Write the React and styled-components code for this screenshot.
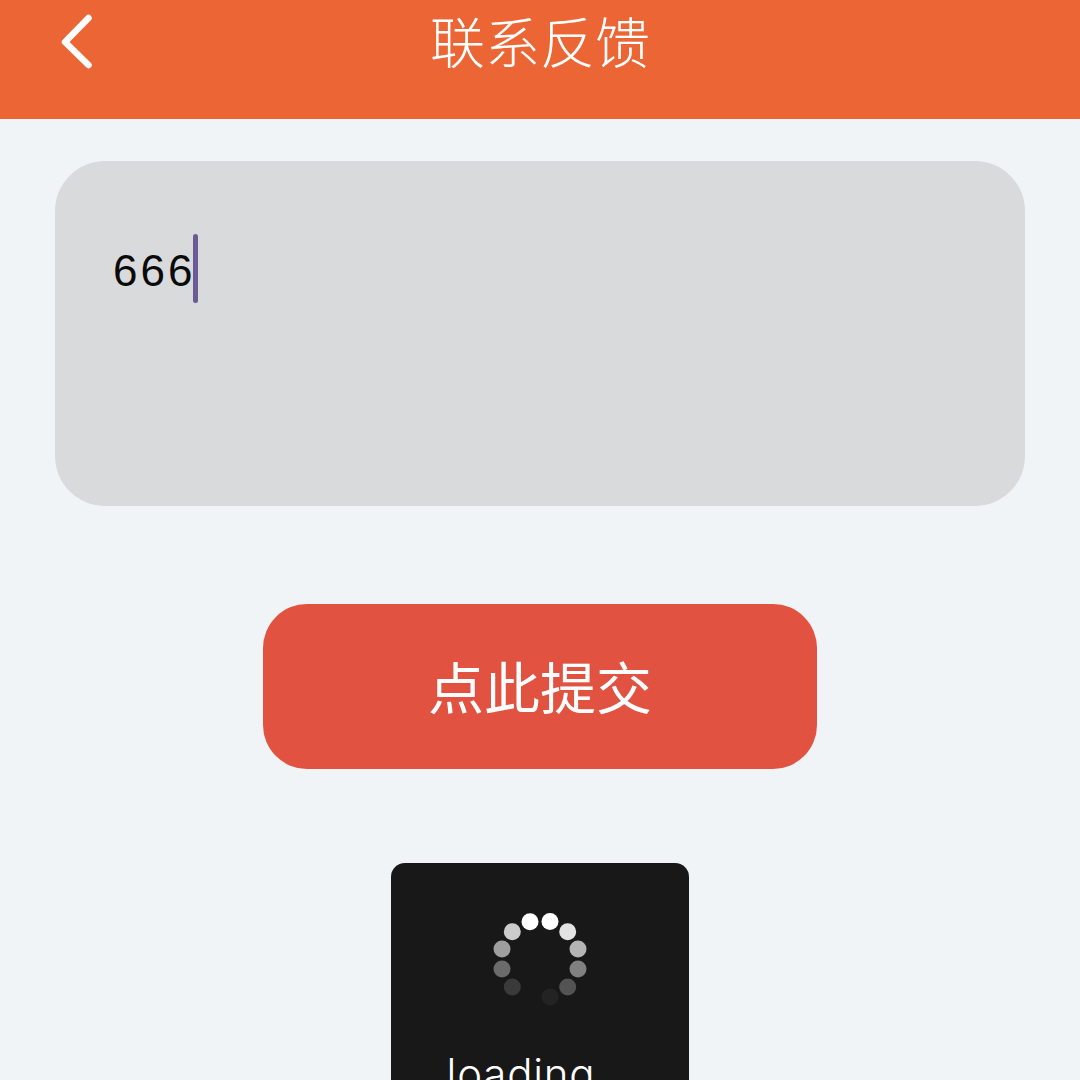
import React from "react";
import styled, { createGlobalStyle } from "styled-components";

const Global = createGlobalStyle`
  html, body { margin: 0; padding: 0; background: #f1f4f6; }
  #root { width: 1080px; height: 1080px; overflow: hidden; }
`;

const Page = styled.div`
  width: 1080px;
  height: 1080px;
  overflow: hidden;
  background: #f1f4f6;
  display: flex;
  flex-direction: column;
  font-family: "Liberation Sans", "Noto Sans CJK SC", sans-serif;
`;

const Header = styled.header`
  flex: none;
  height: 119px;
  background: #ec6535;
  display: grid;
  grid-template-columns: 1fr auto 1fr;
  align-items: start;
  color: #fff;
`;

const BackButton = styled.button`
  justify-self: start;
  width: 40px;
  height: 58px;
  margin: 13px 0 0 58px;
  padding: 0;
  border: 0;
  background: none;
  display: flex;
  color: #fff;
`;

const Title = styled.h1`
  margin: 7px 0 0;
  font: 300 55px/64px "Noto Sans CJK SC", sans-serif;
  color: #fff;
`;

const Main = styled.main`
  flex: 1;
  display: flex;
  flex-direction: column;
  align-items: center;
  padding-top: 42px;
`;

const InputBox = styled.div`
  box-sizing: border-box;
  width: 970px;
  height: 345px;
  border-radius: 50px;
  background: #d9dadc;
  padding: 73px 0 0 58px;
  display: flex;
  align-items: flex-start;
`;

const InputText = styled.span`
  font: 400 44px/74px "Liberation Sans", sans-serif;
  letter-spacing: 3px;
  color: #0a0a0a;
`;

const Caret = styled.span`
  width: 5px;
  height: 69px;
  border-radius: 3px;
  background: #6b5a94;
  margin-left: -2px;
`;

const SubmitButton = styled.button`
  width: 554px;
  height: 165px;
  margin-top: 98px;
  padding: 0 0 3px;
  border: 0;
  border-radius: 44px;
  background: #e25241;
  color: #fff;
  font: 400 56px/1 "Noto Sans CJK SC", sans-serif;
`;

const Toast = styled.div`
  flex: none;
  box-sizing: border-box;
  width: 298px;
  height: 300px;
  margin-top: 94px;
  padding-top: 46px;
  border-radius: 14px;
  background: #181818;
  display: flex;
  flex-direction: column;
  align-items: center;
`;

const LoadingLabel = styled.div`
  margin-top: 40px;
  font: 300 42px/50px "Inter", sans-serif;
  letter-spacing: 0.8px;
  color: #fff;
`;

const spinnerDots = [
  [530, 921.7, 1],
  [550, 921.5, 1],
  [567.7, 931.7, 0.88],
  [578, 949, 0.68],
  [578, 969, 0.45],
  [567.7, 987, 0.26],
  [550, 997, 0.05],
  [512.3, 987, 0.15],
  [502, 969, 0.36],
  [502, 949, 0.58],
  [512.3, 931.7, 0.78],
];

function Spinner() {
  return (
    <svg width="100" height="100" viewBox="490 909 100 100">
      {spinnerDots.map(([cx, cy, o]) => (
        <circle key={`${cx}-${cy}`} cx={cx} cy={cy} r="8.5" fill="#fff" fillOpacity={o} />
      ))}
    </svg>
  );
}

export default function App() {
  return (
    <Page>
      <Global />
      <Header>
        <BackButton aria-label="返回">
          <svg width="40" height="58" viewBox="0 0 40 58" fill="none">
            <path d="M30.5 5 L7 29 L30.5 52" stroke="#fff" strokeWidth="6.5" strokeLinecap="round" strokeLinejoin="round" />
          </svg>
        </BackButton>
        <Title>联系反馈</Title>
      </Header>
      <Main>
        <InputBox>
          <InputText>666</InputText>
          <Caret />
        </InputBox>
        <SubmitButton>点此提交</SubmitButton>
        <Toast>
          <Spinner />
          <LoadingLabel>loading...</LoadingLabel>
        </Toast>
      </Main>
    </Page>
  );
}
